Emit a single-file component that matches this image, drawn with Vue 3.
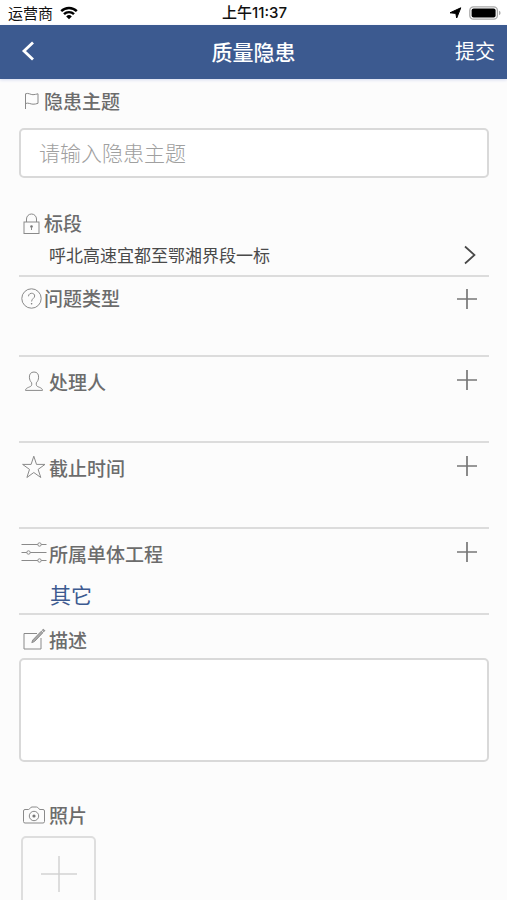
<script setup>
import { ref } from 'vue'

const topic = ref('')
const description = ref('')
const section = ref('呼北高速宜都至鄂湘界段一标')
const project = ref('其它')
</script>

<template>
  <div class="screen">
    <div class="status">
      <div class="carrier">
        <span>运营商</span>
        <svg width="18" height="14" viewBox="0 0 18 14" fill="none" stroke="#000" stroke-width="2.4" aria-hidden="true">
          <path d="M1.2 5.2a11 11 0 0 1 15.6 0" />
          <path d="M4 8.2a7 7 0 0 1 10 0" />
          <path d="M9 13.2 6.2 10.4a4 4 0 0 1 5.6 0z" fill="#000" stroke="none" />
        </svg>
      </div>
      <span class="clock">上午11:37</span>
      <div class="indicators">
        <svg width="13" height="12" viewBox="0 0 13 12" aria-hidden="true">
          <path d="M11.800.8 7.700 11 6.800 6.400 1 5.800z" fill="#000" stroke="#000" stroke-width="1" stroke-linejoin="round" />
        </svg>
        <svg width="32" height="14" viewBox="0 0 32 14" aria-hidden="true">
          <rect x="0.8" y="0.8" width="27.6" height="12.4" rx="3.6" fill="#fff" stroke="#a9a9a9" stroke-width="1.3" />
          <rect x="2.6" y="2.4" width="24" height="9.2" rx="2" fill="#000" />
          <path d="M30 4.8v4.4q1.6-.6 1.6-2.2T30 4.8z" fill="#a9a9a9" />
        </svg>
      </div>
    </div>

    <header class="bar">
      <button class="back" type="button" aria-label="返回">
        <svg width="14" height="20" viewBox="0 0 14 20" fill="none" stroke="#fff" stroke-width="2.8" aria-hidden="true">
          <path d="M12 1.5 3 10l9 8.5" />
        </svg>
      </button>
      <h1>质量隐患</h1>
      <button class="submit" type="submit" form="hazard">提交</button>
    </header>

    <form id="hazard" class="form" @submit.prevent>
      <label class="label" for="topic">
        <svg class="icon" viewBox="0 0 25 28" aria-hidden="true">
          <path d="M6.500 21V5.800c3-1.200 5 .9 7.500.9 2 0 3.200-.6 5-.9v9.500c-2 .7-3.200.9-5 .9-2.500 0-4.500-1.800-7.500-.7" />
        </svg>
        隐患主题
      </label>
      <input id="topic" v-model="topic" class="topic" type="text" placeholder="请输入隐患主题" />

      <section class="row section">
        <div class="label">
          <svg class="icon" viewBox="0 0 25 28" aria-hidden="true">
            <rect x="5" y="12" width="15" height="11.500" />
            <path d="M7.500 12V9a5 5 0 0 1 10 0v3" />
            <circle cx="12.500" cy="16.500" r="1.300" class="solid" />
            <path d="M12.500 17v3" />
          </svg>
          标段
        </div>
        <button class="pick" type="button">
          <span>{{ section }}</span>
          <svg width="12" height="20" viewBox="0 0 12 20" fill="none" stroke="#484848" stroke-width="1.700" aria-hidden="true">
            <path d="M1 1.500 10.500 10 1 18.500" />
          </svg>
        </button>
      </section>

      <section class="row type">
        <div class="head">
          <div class="label">
            <svg class="icon" viewBox="0 0 25 28" aria-hidden="true">
              <circle cx="12.500" cy="13.500" r="9.700" />
              <path d="M9.500 11.300c0-4 6.200-4 6.200-.3 0 2.300-3.100 2.600-3.100 5.500" />
              <circle cx="12.600" cy="18.800" r=".8" class="solid" />
            </svg>
            问题类型
          </div>
          <button class="add" type="button" aria-label="添加问题类型">
            <svg viewBox="0 0 22 22" aria-hidden="true"><path d="M11 1v20M1 11h20" /></svg>
          </button>
        </div>
      </section>

      <section class="row">
        <div class="head">
          <div class="label">
            <svg class="icon wide" viewBox="0 0 30 28" aria-hidden="true">
              <path d="M15 3c-3.200 0-4.700 2.200-4.600 5.200.1 2.600 1 4.300 2.300 5.600v2c0 2.600-6.200 2.200-6.200 5.600h17c0-3.400-6.200-3-6.200-5.600v-2c1.300-1.300 2.200-3 2.300-5.600.1-3-1.400-5.200-4.600-5.200z" />
            </svg>
            处理人
          </div>
          <button class="add" type="button" aria-label="添加处理人">
            <svg viewBox="0 0 22 22" aria-hidden="true"><path d="M11 1v20M1 11h20" /></svg>
          </button>
        </div>
      </section>

      <section class="row">
        <div class="head">
          <div class="label">
            <svg class="icon wide" viewBox="0 0 30 28" aria-hidden="true">
              <path d="M14.800 1.200l2.700 8.200h8.500l-6.900 5 2.700 8.100-7-5-6.900 5 2.600-8.100-6.900-5h8.500z" />
            </svg>
            截止时间
          </div>
          <button class="add" type="button" aria-label="添加截止时间">
            <svg viewBox="0 0 22 22" aria-hidden="true"><path d="M11 1v20M1 11h20" /></svg>
          </button>
        </div>
      </section>

      <section class="row project">
        <div class="head">
          <div class="label">
            <svg class="icon wide" viewBox="0 0 30 28" aria-hidden="true">
              <path d="M2.500 3.500h16.300M22.200 3.500h5.300M2.500 11.500h5.300M11.200 11.500h16.300M2.500 19.500h16.300M22.200 19.500h5.300" />
              <circle cx="20.500" cy="3.500" r="1.700" />
              <circle cx="9.500" cy="11.500" r="1.700" />
              <circle cx="20.500" cy="19.500" r="1.700" />
            </svg>
            所属单体工程
          </div>
          <button class="add" type="button" aria-label="添加所属单体工程">
            <svg viewBox="0 0 22 22" aria-hidden="true"><path d="M11 1v20M1 11h20" /></svg>
          </button>
        </div>
        <p class="value">{{ project }}</p>
      </section>

      <label class="label desc-label" for="description">
        <svg class="icon wide" viewBox="0 0 30 28" aria-hidden="true">
          <path d="M18 6.500H5v15.500h17V11" />
          <path d="M12.800 15.600l1-2.600 8.500-8.800 1.600 1.500-8.500 8.900zM23.300 3.200l1-1 1.600 1.500-1 1z" class="pencil" />
        </svg>
        描述
      </label>
      <textarea id="description" v-model="description" class="desc"></textarea>

      <div class="label photo-label">
        <svg class="icon wide" viewBox="0 0 30 28" aria-hidden="true">
          <path d="M6 7.500h3.500c1.500 0 1.500-2.500 3.500-2.500h4.500c2 0 2 2.500 3.500 2.500h3q1.500 0 1.500 1.500v10.500q0 1.500-1.500 1.500H6q-1.500 0-1.500-1.500V9q0-1.500 1.500-1.500z" />
          <circle cx="15" cy="14" r="4.700" />
          <circle cx="15" cy="14" r="1.600" class="solid" />
        </svg>
        照片
      </div>
      <button class="photo" type="button" aria-label="添加照片">
        <svg width="38" height="38" viewBox="0 0 38 38" fill="none" stroke="#d2d2d2" stroke-width="1.500" aria-hidden="true">
          <path d="M19 1v36M1 19h36" />
        </svg>
      </button>
    </form>
  </div>
</template>

<style>
body {
  margin: 0;
}
</style>

<style scoped>
.screen {
  display: flex;
  flex-direction: column;
  height: 100vh;
  background: #fcfcfc;
  color: #6c6c6c;
  font-family: "Noto Sans CJK SC", sans-serif;
}

.screen *,
.screen {
  box-sizing: border-box;
}

button {
  padding: 0;
  border: 0;
  background: none;
  color: inherit;
  font: inherit;
}

svg {
  display: block;
  flex: none;
}

.status,
.bar {
  display: grid;
  grid-template-columns: 1fr auto 1fr;
  align-items: center;
  flex: none;
}

.status {
  height: 25px;
  padding: 1px 6px 0 8px;
  background: #fff;
  color: #111;
  font-size: 15px;
  line-height: 22px;
}

.carrier,
.indicators {
  display: flex;
  align-items: center;
  gap: 7px;
}

.indicators {
  justify-content: flex-end;
}

.clock {
  font-family: Inter, "Noto Sans CJK SC", sans-serif;
  font-weight: 500;
}

.bar {
  position: relative;
  height: 54px;
  padding: 0 12px 2px;
  background: #3c5a90;
  box-shadow: 0 1px 3px #d4daf0;
  color: #fff;
}

.bar h1 {
  margin: 0;
  font-size: 21px;
  font-weight: 500;
  line-height: 30px;
}

.back {
  justify-self: start;
  padding-left: 9px;
}

.submit {
  justify-self: end;
  font-size: 20px;
  line-height: 30px;
}

.form {
  flex: 1;
  min-height: 0;
  padding: 9px 18px 0 19px;
  overflow-y: auto;
  scrollbar-width: none;
}

.label {
  display: flex;
  align-items: flex-start;
  height: 28px;
  font-size: 19px;
  font-weight: 500;
  line-height: 26px;
}

.icon {
  width: 25px;
  height: 28px;
  fill: none;
  stroke: #8a8a8a;
  stroke-width: 1;
}

.icon.wide {
  width: 30px;
}

.icon .solid {
  fill: #777;
  stroke: none;
}

.icon .pencil {
  fill: #aaa;
}

.topic,
.desc {
  display: block;
  width: 100%;
  border: 2px solid #d9d9d9;
  border-radius: 5px;
  background: #fff;
  color: #555;
  font-family: inherit;
  font-size: 21px;
  outline: none;
}

.topic {
  height: 50px;
  margin: 12px 0 32px;
  padding: 0 18px 2px;
  font-weight: 300;
}

.topic::placeholder {
  color: #a0a0a0;
  opacity: 1;
}

.row {
  min-height: 86px;
  padding-top: 12px;
  border-bottom: 2px solid #dcdcdc;
}

.row.section {
  min-height: 0;
  padding: 0 0 8px;
}

.row.type {
  min-height: 80px;
  padding-top: 8px;
}

.head {
  display: flex;
  justify-content: space-between;
  align-items: flex-start;
  padding-right: 11px;
}

.type .head {
  align-items: center;
}

.add svg {
  width: 22px;
  height: 22px;
  fill: none;
  stroke: #777;
  stroke-width: 1.700;
}

.pick {
  display: flex;
  justify-content: space-between;
  align-items: center;
  width: 100%;
  height: 24px;
  margin-top: 5px;
  padding: 0 13px 0 30px;
  color: #4a4a4a;
  font-size: 17px;
  line-height: 24px;
}

.value {
  margin: 11px 0 0;
  padding-left: 31px;
  color: #3c5a90;
  font-size: 21px;
  line-height: 28px;
}

.desc-label {
  margin-top: 12px;
}

.desc {
  height: 104px;
  margin-top: 3px;
  padding: 8px 18px;
  resize: none;
}

.photo-label {
  margin-top: 40px;
}

.photo {
  display: grid;
  place-items: center;
  width: 75px;
  height: 75px;
  margin: 6px 0 0 2px;
  border: 2px solid #dedede;
  border-radius: 5px;
}
</style>
